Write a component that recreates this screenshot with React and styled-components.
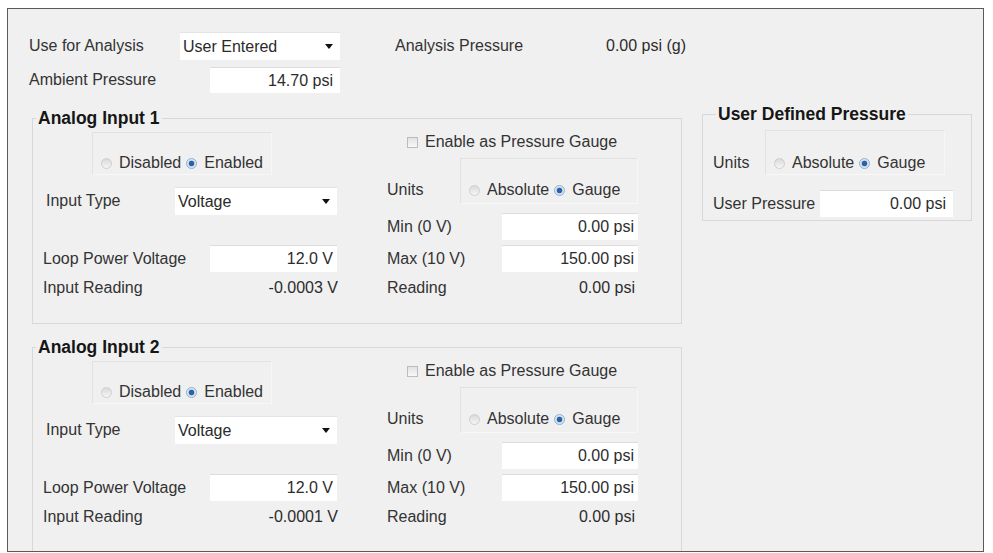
import React from 'react';
import styled, { createGlobalStyle } from 'styled-components';

const Global = createGlobalStyle`
  html, body { margin: 0; padding: 0; background: #ffffff; }
  body { font-family: "Liberation Sans", Arial, sans-serif; font-size: 16px; color: #333333; }
  * { box-sizing: border-box; }
`;

const Frame = styled.div`
  margin: 8px 0 0 7px;
  width: 977px;
  height: 544px;
  border: 1px solid #5a5a5a;
  background: #f0f0f0;
  padding: 23px 0 0 21px;
  overflow: hidden;
`;

const Row = styled.div`
  display: flex;
  align-items: center;
  height: ${p => p.$h}px;
  margin-top: ${p => p.$mt || 0}px;
  margin-left: ${p => p.$ml || 0}px;
`;

const Label = styled.span`
  flex: none;
  width: ${p => p.$w}px;
  white-space: nowrap;
  line-height: 20px;
  color: #333333;
`;

const Value = styled.span`
  flex: none;
  width: ${p => p.$w}px;
  text-align: ${p => (p.$left ? 'left' : 'right')};
  white-space: nowrap;
  line-height: 20px;
  color: #2c2c2c;
`;

const Dropdown = styled.div`
  flex: none;
  width: ${p => p.$w}px;
  height: ${p => p.$h}px;
  background: #ffffff;
  border-top: 1px solid #e4e4e4;
  display: flex;
  align-items: center;
  justify-content: space-between;
  padding: 0 7px 0 3px;
  color: #2a2a2a;
`;

const Caret = styled.span`
  width: 0;
  height: 0;
  border-left: 4px solid transparent;
  border-right: 4px solid transparent;
  border-top: 5px solid #111111;
`;

const Field = styled.input`
  flex: none;
  width: ${p => p.$w}px;
  height: ${p => p.$h}px;
  background: #ffffff;
  border: none;
  border-top: 1px solid #dcdcdc;
  font: inherit;
  color: #2c2c2c;
  text-align: right;
  padding: 0 ${p => p.$pr || 6}px 0 0;
  outline: none;
`;

const Body = styled.div`
  display: flex;
  align-items: flex-start;
  margin-left: 3px;
`;

const LeftStack = styled.div`
  display: flex;
  flex-direction: column;
  width: 650px;
  margin-top: 15px;
`;

const Group = styled.fieldset`
  margin: ${p => p.$mt || 0}px 0 0 ${p => p.$ml || 0}px;
  padding: 0 0 ${p => p.$pb}px ${p => p.$pl || 0}px;
  border: 1px solid #d8d8d8;
  min-width: 0;
  width: ${p => p.$w}px;
  flex: none;
`;

const Title = styled.legend`
  font-weight: bold;
  font-size: 17.5px;
  color: #161616;
  padding: 0 2px;
  margin-left: 3px;
  line-height: 20px;
  height: 20px;
  white-space: nowrap;
`;

const Columns = styled.div`
  display: flex;
`;

const Col = styled.div`
  display: flex;
  flex-direction: column;
  width: ${p => p.$w}px;
  flex: none;
`;

const SubBox = styled.div`
  flex: none;
  display: flex;
  align-items: flex-end;
  width: ${p => p.$w}px;
  height: ${p => p.$h}px;
  margin-top: ${p => p.$mt || 0}px;
  margin-left: ${p => p.$ml || 0}px;
  padding: 0 0 ${p => p.$pb}px 8px;
  border: 1px solid #e2e2e2;
  border-bottom-color: #f7f7f7;
  border-right-color: #f7f7f7;
`;

const Option = styled.span`
  display: flex;
  align-items: center;
  gap: 7px;
  margin-right: 5px;
  line-height: 20px;
  white-space: nowrap;
  color: #333333;
`;

const Dot = styled.span`
  flex: none;
  width: 11px;
  height: 11px;
  border-radius: 50%;
  border: 1px solid ${p => (p.$on ? '#8fb0d2' : '#cfcfcf')};
  background: ${p =>
    p.$on
      ? 'radial-gradient(circle, #2d63a0 0 2.4px, #cfe0f1 3.2px, #eef4fb 100%)'
      : 'linear-gradient(#d9d9d9, #f6f6f6)'};
`;

const Check = styled.span`
  flex: none;
  width: 11px;
  height: 11px;
  border: 1px solid #bcbcbc;
  background: linear-gradient(#e2e2e2, #f8f8f8);
  margin: 0 7px 0 20px;
`;

const Radio = ({ on, children }) => (
  <Option>
    <Dot $on={on} />
    {children}
  </Option>
);

const AnalogInput = ({ index, reading, mt }) => (
  <Group $w={650} $pb={25} $mt={mt}>
    <Title>Analog Input {index}</Title>
    <Columns>
      <Col $w={354}>
        <SubBox $w={180} $h={43} $mt={4} $ml={59} $pb={1}>
          <Radio>Disabled</Radio>
          <Radio on>Enabled</Radio>
        </SubBox>
        <Row $h={28} $mt={12} $ml={13}>
          <Label $w={129}>Input Type</Label>
          <Dropdown $w={162} $h={28}>
            Voltage
            <Caret />
          </Dropdown>
        </Row>
        <Row $h={27} $mt={30} $ml={10}>
          <Label $w={167}>Loop Power Voltage</Label>
          <Field $w={127} $h={27} $pr={4} defaultValue="12.0 V" readOnly />
        </Row>
        <Row $h={20} $mt={6} $ml={10}>
          <Label $w={167}>Input Reading</Label>
          <Value $w={128}>{reading}</Value>
        </Row>
      </Col>
      <Col $w={251}>
        <Row $h={20} $mt={4}>
          <Check />
          <Label $w={200}>Enable as Pressure Gauge</Label>
        </Row>
        <Row $h={46} $mt={6}>
          <Label $w={73} style={{ alignSelf: 'flex-end', marginBottom: 4 }}>Units</Label>
          <SubBox $w={178} $h={46} $pb={3}>
            <Radio>Absolute</Radio>
            <Radio on>Gauge</Radio>
          </SubBox>
        </Row>
        <Row $h={27} $mt={9}>
          <Label $w={115}>Min (0 V)</Label>
          <Field $w={136} $h={27} $pr={4} defaultValue="0.00 psi" readOnly />
        </Row>
        <Row $h={27} $mt={5}>
          <Label $w={115}>Max (10 V)</Label>
          <Field $w={136} $h={27} $pr={4} defaultValue="150.00 psi" readOnly />
        </Row>
        <Row $h={20} $mt={6}>
          <Label $w={115}>Reading</Label>
          <Value $w={133}>0.00 psi</Value>
        </Row>
      </Col>
    </Columns>
  </Group>
);

export default function App() {
  return (
    <>
      <Global />
      <Frame>
        <Row $h={28}>
          <Label $w={151}>Use for Analysis</Label>
          <Dropdown $w={160} $h={28}>
            User Entered
            <Caret />
          </Dropdown>
          <Label $w={55} />
          <Label $w={211}>Analysis Pressure</Label>
          <Value $w={120} $left>0.00 psi (g)</Value>
        </Row>
        <Row $h={26} $mt={7}>
          <Label $w={181}>Ambient Pressure</Label>
          <Field $w={130} $h={26} $pr={7} defaultValue="14.70 psi" readOnly />
        </Row>
        <Body>
          <LeftStack>
            <AnalogInput index={1} reading="-0.0003 V" />
            <AnalogInput index={2} reading="-0.0001 V" mt={13} />
          </LeftStack>
          <Group $w={270} $pb={3} $pl={10} $mt={11} $ml={20}>
            <Title>User Defined Pressure</Title>
            <Row $h={45} $mt={6}>
              <Label $w={52} style={{ alignSelf: 'flex-end', marginBottom: 2 }}>Units</Label>
              <SubBox $w={180} $h={45} $pb={1}>
                <Radio>Absolute</Radio>
                <Radio on>Gauge</Radio>
              </SubBox>
            </Row>
            <Row $h={27} $mt={15}>
              <Label $w={107}>User Pressure</Label>
              <Field $w={133} $h={27} $pr={7} defaultValue="0.00 psi" readOnly />
            </Row>
          </Group>
        </Body>
      </Frame>
    </>
  );
}
